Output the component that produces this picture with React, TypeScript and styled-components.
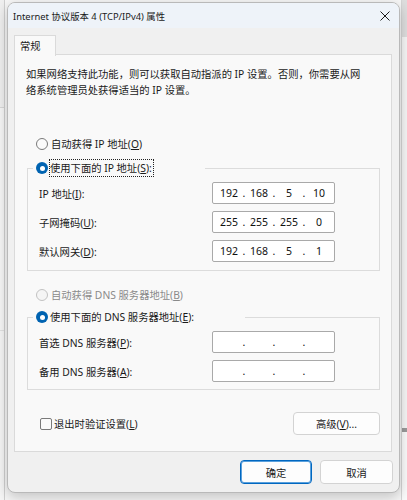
import React from "react";
import styled, { createGlobalStyle } from "styled-components";

const Global = createGlobalStyle`
  html, body { margin: 0; padding: 0; }
  body {
    background: #ededed;
    font-family: "Segoe UI", "Noto Sans", "Noto Sans CJK SC", sans-serif;
    font-size: 10px;
    color: #1a1a1a;
  }
`;

const FONT = `"Segoe UI", "Noto Sans", "Noto Sans CJK SC", sans-serif`;

const Desktop = styled.div`
  position: relative;
  width: 407px;
  height: 500px;
  overflow: hidden;
  background: #f3f3f3;
  box-sizing: border-box;
  padding: 2px 0 0 7px;
`;

const BackWindow = styled.div`
  position: absolute;
  inset: 0;
  display: grid;
  grid-template-columns: 5px 1fr 6px;
  background: #f7f7f7;
`;

const BackLeft = styled.div`
  background: linear-gradient(#f0f0f0 0 107px, #d8d8d8 107px 108px, #f7f7f7 108px 330px, #e2e2e2 330px 331px, #f6f6f6 331px);
  border-right: 1px solid #d0d0d0;
`;

const BackRight = styled.div`
  background: linear-gradient(#dedede 0 37px, #f6f6f6 37px 428px, #9a9a9a 428px 432px, #fbfbfb 432px);
  border-left: 1px solid #d6d6d6;
`;

const Dialog = styled.div`
  position: relative;
  width: 393px;
  height: 491px;
  box-sizing: border-box;
  border: 1px solid #b9b9b9;
  border-radius: 8px;
  background: #f0f0f0;
  box-shadow: 0 4px 14px rgba(0, 0, 0, 0.22);
  overflow: hidden;
  display: flex;
  flex-direction: column;
  font-family: ${FONT};
  font-size: 10.3px;
`;

const TitleBar = styled.div`
  height: 25px;
  flex: none;
  background: #eef3f9;
  display: flex;
  align-items: center;
  justify-content: space-between;
  padding: 0 8px 0 5px;
  font-size: 9.4px;
  color: #1a1a1a;
`;

const CloseBtn = styled.div`
  width: 12px;
  height: 12px;
  display: flex;
  align-items: center;
  justify-content: center;
`;

const Body = styled.div`
  flex: 1;
  display: flex;
  flex-direction: column;
  padding: 7px 6px 0 6px;
`;

const TabStrip = styled.div`
  display: flex;
  height: 20px;
  position: relative;
  z-index: 1;
  margin-bottom: -1px;
`;

const Tab = styled.div`
  width: 42px;
  box-sizing: border-box;
  border: 1px solid #dadada;
  border-bottom: none;
  background: #f9f9f9;
  padding-left: 5px;
  height: 21px;
  line-height: 20px;
`;

const Panel = styled.div`
  width: 378px;
  height: 398px;
  box-sizing: border-box;
  border: 1px solid #dadada;
  background: #f9f9f9;
  padding-top: 11px;
  display: flex;
  flex-direction: column;
`;

const Desc = styled.p`
  margin: 0 0 0 11px;
  line-height: 16px;
  width: 337px;
`;

const RadioRow = styled.div<{ $mt: number; $disabled?: boolean }>`
  display: flex;
  align-items: center;
  height: 16px;
  margin: ${(p) => p.$mt}px 0 0 21px;
  color: ${(p) => (p.$disabled ? "#8a8a8a" : "#1a1a1a")};
  gap: 2px;
`;

const Radio = styled.span<{ $checked?: boolean; $disabled?: boolean }>`
  width: 12px;
  height: 12px;
  box-sizing: border-box;
  border-radius: 50%;
  flex: none;
  border: ${(p) =>
    p.$checked ? "none" : `1px solid ${p.$disabled ? "#c2c2c2" : "#7a7a7a"}`};
  background: ${(p) => (p.$checked ? "#0063b1" : p.$disabled ? "#f5f5f5" : "#fbfbfb")};
  display: flex;
  align-items: center;
  justify-content: center;
  &::after {
    content: "";
    display: ${(p) => (p.$checked ? "block" : "none")};
    width: 5px;
    height: 5px;
    border-radius: 50%;
    background: #ffffff;
  }
`;

const RadioLabel = styled.span<{ $focus?: boolean }>`
  line-height: 16px;
  border: 1px dotted ${(p) => (p.$focus ? "#222" : "transparent")};
  padding: 0 1px 0 0;
  white-space: nowrap;
`;

const Group = styled.fieldset<{ $mt: number }>`
  margin: ${(p) => p.$mt}px 11px 0 12px;
  padding: 0;
  border: 1px solid #dcdcdc;
  min-width: 0;
`;

const Legend = styled.legend<{ $w: number }>`
  margin-left: 5px;
  padding: 0 0 0 3px;
  width: ${(p) => p.$w}px;
  box-sizing: border-box;
  height: 18px;
  display: flex;
  align-items: center;
  gap: 1px;
`;

const Rows = styled.div<{ $pb: number }>`
  display: flex;
  flex-direction: column;
  gap: 7px;
  padding: 5px 0 ${(p) => p.$pb}px 11px;
`;

const FieldRow = styled.div`
  display: grid;
  grid-template-columns: 173px 123px;
  align-items: center;
  height: 22px;
`;

const IpBox = styled.div`
  height: 22px;
  box-sizing: border-box;
  border: 1px solid #a9a9a9;
  border-radius: 2px;
  background: #ffffff;
  display: flex;
  align-items: center;
  padding-left: 3px;
  font-size: 10.5px;
  color: #111;
`;

const Octet = styled.span`
  width: 26px;
  text-align: center;
`;

const Dot = styled.span`
  width: 4px;
  text-align: center;
`;

const BottomRow = styled.div`
  display: flex;
  justify-content: space-between;
  align-items: center;
  margin: 22px 11px 0 25px;
`;

const CheckLabel = styled.label`
  display: flex;
  align-items: center;
  gap: 2px;
  line-height: 16px;
`;

const CheckBox = styled.span`
  width: 12px;
  height: 12px;
  box-sizing: border-box;
  border: 1px solid #7a7a7a;
  border-radius: 2px;
  background: #fbfbfb;
`;

const Button = styled.button<{ $w: number; $primary?: boolean }>`
  width: ${(p) => p.$w}px;
  height: ${(p) => (p.$primary !== undefined ? 24 : 23)}px;
  box-sizing: border-box;
  font-family: ${FONT};
  font-size: 10.3px;
  color: #1a1a1a;
  background: #fdfdfd;
  border: 1px solid ${(p) => (p.$primary ? "#0067c0" : "#d3d3d3")};
  box-shadow: ${(p) => (p.$primary ? "inset 0 0 0 1px #5aa0dc" : "none")};
  border-radius: 4px;
  padding: 0;
`;

const Footer = styled.div`
  display: flex;
  justify-content: flex-end;
  gap: 8px;
  padding: 8px 0 0 0;
`;

const ip = (parts: string[]) => (
  <IpBox>
    {parts.map((p, i) => (
      <React.Fragment key={i}>
        <Octet>{p}</Octet>
        {i < 3 && <Dot>.</Dot>}
      </React.Fragment>
    ))}
  </IpBox>
);

export default function App() {
  return (
    <>
      <Global />
      <Desktop>
        <BackWindow>
          <BackLeft />
          <div />
          <BackRight />
        </BackWindow>
        <Dialog>
          <TitleBar>
            <span>Internet 协议版本 4 (TCP/IPv4) 属性</span>
            <CloseBtn>
              <svg width="10" height="10" viewBox="0 0 10 10">
                <path d="M0.5 0.5 L9.5 9.5 M9.5 0.5 L0.5 9.5" stroke="#1a1a1a" strokeWidth="1" />
              </svg>
            </CloseBtn>
          </TitleBar>
          <Body>
            <TabStrip>
              <Tab>常规</Tab>
            </TabStrip>
            <Panel>
              <Desc>
                如果网络支持此功能，则可以获取自动指派的 IP 设置。否则，你需要从网络系统管理员处获得适当的 IP 设置。
              </Desc>
              <RadioRow $mt={38}>
                <Radio />
                <RadioLabel>
                  自动获得 IP 地址(<u>O</u>)
                </RadioLabel>
              </RadioRow>
              <Group $mt={7}>
                <Legend $w={172}>
                  <Radio $checked />
                  <RadioLabel $focus>
                    使用下面的 IP 地址(<u>S</u>):
                  </RadioLabel>
                </Legend>
                <Rows $pb={8}>
                  <FieldRow>
                    <span>
                      IP 地址(<u>I</u>):
                    </span>
                    {ip(["192", "168", "5", "10"])}
                  </FieldRow>
                  <FieldRow>
                    <span>
                      子网掩码(<u>U</u>):
                    </span>
                    {ip(["255", "255", "255", "0"])}
                  </FieldRow>
                  <FieldRow>
                    <span>
                      默认网关(<u>D</u>):
                    </span>
                    {ip(["192", "168", "5", "1"])}
                  </FieldRow>
                </Rows>
              </Group>
              <RadioRow $mt={16} $disabled>
                <Radio $disabled />
                <RadioLabel>
                  自动获得 DNS 服务器地址(<u>B</u>)
                </RadioLabel>
              </RadioRow>
              <Group $mt={5}>
                <Legend $w={212}>
                  <Radio $checked />
                  <RadioLabel>
                    使用下面的 DNS 服务器地址(<u>E</u>):
                  </RadioLabel>
                </Legend>
                <Rows $pb={7}>
                  <FieldRow>
                    <span>
                      首选 DNS 服务器(<u>P</u>):
                    </span>
                    {ip(["", "", "", ""])}
                  </FieldRow>
                  <FieldRow>
                    <span>
                      备用 DNS 服务器(<u>A</u>):
                    </span>
                    {ip(["", "", "", ""])}
                  </FieldRow>
                </Rows>
              </Group>
              <BottomRow>
                <CheckLabel>
                  <CheckBox />
                  <span>
                    退出时验证设置(<u>L</u>)
                  </span>
                </CheckLabel>
                <Button $w={87}>
                  高级(<u>V</u>)...
                </Button>
              </BottomRow>
            </Panel>
            <Footer>
              <Button $w={72} $primary>
                确定
              </Button>
              <Button $w={73} $primary={false}>
                取消
              </Button>
            </Footer>
          </Body>
        </Dialog>
      </Desktop>
    </>
  );
}
